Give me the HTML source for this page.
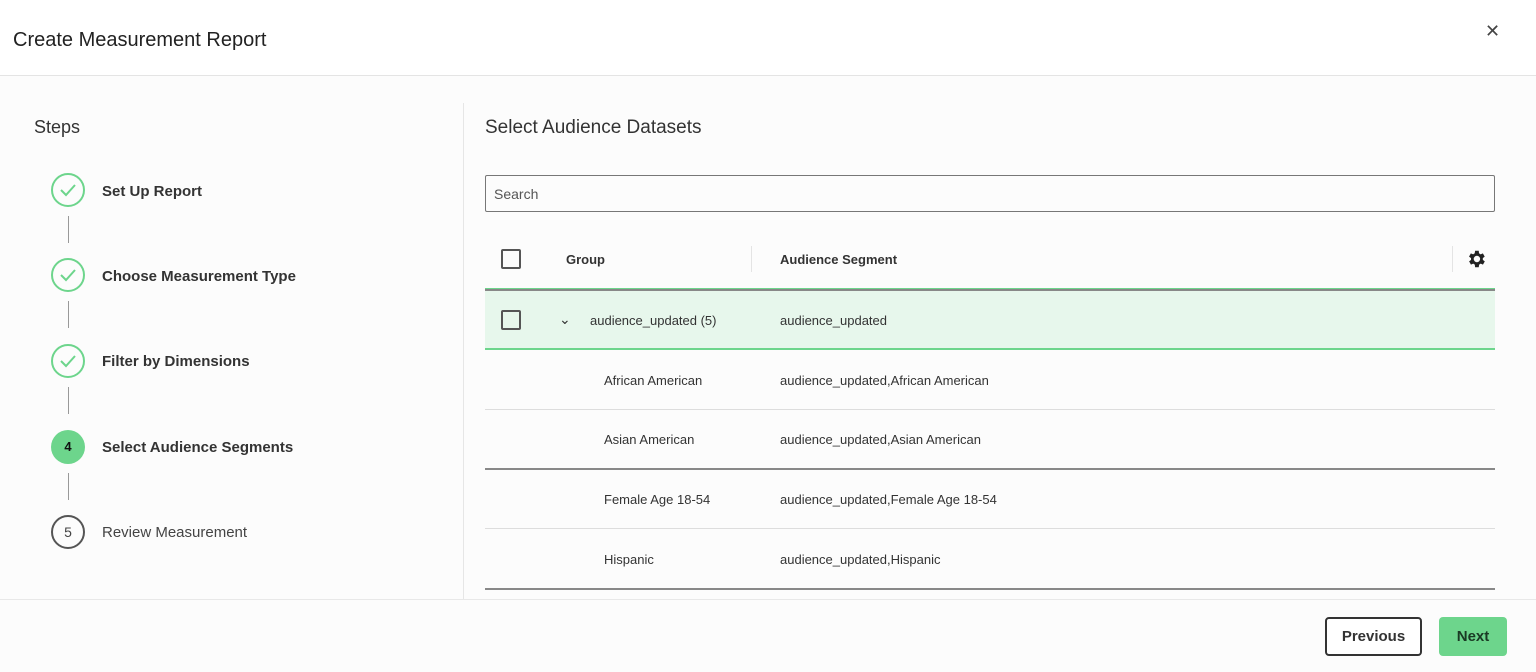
<!DOCTYPE html>
<html><head><meta charset="utf-8"><style>
*{box-sizing:border-box;margin:0;padding:0}
body{width:1536px;height:672px;background:#fcfcfc;font-family:"Liberation Sans",sans-serif;color:#333;position:relative;overflow:hidden}
.abs{position:absolute}
.hdr{left:0;top:0;width:1536px;height:76px;border-bottom:1px solid #e4e4e4;background:#fff}
.title{left:13px;top:29px;font-size:20px;color:#222}
.close{left:1485px;top:21px;font-size:18px;color:#444}
.side{left:463px;top:103px;width:1px;height:497px;background:#e6e6e6}
.steps{left:34px;top:117px;font-size:18px;color:#333}
.circ{width:34px;height:34px;border-radius:50%;left:51px}
.ok{border:2px solid #6dd58c}
.lbl{left:102px;font-size:15px;font-weight:bold;color:#333}
.vl{left:68px;width:1px;height:27px;background:#999}
.h2{left:485px;top:117px;font-size:19px;color:#333}
.search{left:485px;top:175px;width:1010px;height:37px;border:1px solid #777;border-radius:2px;padding:10px 8px;font-size:14px;color:#555}
.cb{width:20px;height:20px;border:2px solid #555;border-radius:2px;left:501px}
.th{font-size:13px;font-weight:bold;color:#333;top:252px}
.row{left:485px;width:1010px;height:60px}
.cell{font-size:13px;color:#333}
.btn{top:617px;height:39px;border-radius:4px;font-size:15px;font-weight:bold;text-align:center;line-height:35px}
</style></head><body>
<div class="abs hdr"></div>
<div class="abs title">Create Measurement Report</div>
<div class="abs close">✕</div>
<div class="abs side"></div>
<div class="abs steps">Steps</div>

<div class="abs circ ok" style="top:173px"><svg width="30" height="30" viewBox="0 0 30 30"><path d="M8 15l5 5 9-10" fill="none" stroke="#6dd58c" stroke-width="2"/></svg></div>
<div class="abs lbl" style="top:183px">Set Up Report</div>
<div class="abs vl" style="top:216px"></div>
<div class="abs circ ok" style="top:258px"><svg width="30" height="30" viewBox="0 0 30 30"><path d="M8 15l5 5 9-10" fill="none" stroke="#6dd58c" stroke-width="2"/></svg></div>
<div class="abs lbl" style="top:268px">Choose Measurement Type</div>
<div class="abs vl" style="top:301px"></div>
<div class="abs circ ok" style="top:344px"><svg width="30" height="30" viewBox="0 0 30 30"><path d="M8 15l5 5 9-10" fill="none" stroke="#6dd58c" stroke-width="2"/></svg></div>
<div class="abs lbl" style="top:353px">Filter by Dimensions</div>
<div class="abs vl" style="top:387px"></div>
<div class="abs circ" style="top:430px;background:#6dd58c;text-align:center;line-height:34px;font-weight:bold;font-size:13px;color:#111">4</div>
<div class="abs lbl" style="top:439px">Select Audience Segments</div>
<div class="abs vl" style="top:473px"></div>
<div class="abs circ" style="top:515px;border:2px solid #555;text-align:center;line-height:30px;font-size:14px;color:#444">5</div>
<div class="abs lbl" style="top:524px;font-weight:normal;color:#444">Review Measurement</div>

<div class="abs h2">Select Audience Datasets</div>
<div class="abs search">Search</div>

<div class="abs cb" style="top:249px"></div>
<div class="abs th" style="left:566px">Group</div>
<div class="abs" style="left:751px;top:246px;width:1px;height:26px;background:#e4e4e4"></div>
<div class="abs th" style="left:780px">Audience Segment</div>
<div class="abs" style="left:1452px;top:246px;width:1px;height:26px;background:#e4e4e4"></div>
<svg class="abs" style="left:1465px;top:248px" width="22" height="22" viewBox="0 0 24 24"><path fill="#222" d="M19.4 13a7.5 7.5 0 000-2l2.1-1.6-2-3.5-2.5 1a7 7 0 00-1.7-1L15 3h-4l-.4 2.9a7 7 0 00-1.7 1l-2.5-1-2 3.5L6.6 11a7.5 7.5 0 000 2l-2.1 1.6 2 3.5 2.5-1a7 7 0 001.7 1L11 21h4l.4-2.9a7 7 0 001.7-1l2.5 1 2-3.5zM13 15.5a3.5 3.5 0 110-7 3.5 3.5 0 010 7z"/></svg>

<div class="abs row" style="top:288px;height:62px;background:#e7f7ec;border-top:3px solid #888;border-bottom:2px solid #6dd58c"></div>
<div class="abs" style="left:485px;top:288px;width:1010px;height:1px;background:#6dd58c"></div>
<div class="abs cb" style="top:310px"></div>
<div class="abs cell" style="left:559px;top:311px;font-size:14px">⌄</div>
<div class="abs cell" style="left:590px;top:313px">audience_updated (5)</div>
<div class="abs cell" style="left:780px;top:313px">audience_updated</div>

<div class="abs cell" style="left:604px;top:373px">African American</div>
<div class="abs cell" style="left:780px;top:373px">audience_updated,African American</div>
<div class="abs" style="left:485px;top:409px;width:1010px;height:1px;background:#ddd"></div>
<div class="abs cell" style="left:604px;top:432px">Asian American</div>
<div class="abs cell" style="left:780px;top:432px">audience_updated,Asian American</div>
<div class="abs" style="left:485px;top:468px;width:1010px;height:2px;background:#888"></div>
<div class="abs cell" style="left:604px;top:492px">Female Age 18-54</div>
<div class="abs cell" style="left:780px;top:492px">audience_updated,Female Age 18-54</div>
<div class="abs" style="left:485px;top:528px;width:1010px;height:1px;background:#ddd"></div>
<div class="abs cell" style="left:604px;top:552px">Hispanic</div>
<div class="abs cell" style="left:780px;top:552px">audience_updated,Hispanic</div>
<div class="abs" style="left:485px;top:588px;width:1010px;height:2px;background:#888"></div>

<div class="abs" style="left:0;top:599px;width:1536px;height:1px;background:#e8e8e8"></div>
<div class="abs btn" style="left:1325px;width:97px;border:2px solid #333;background:#fff;color:#333">Previous</div>
<div class="abs btn" style="left:1439px;width:68px;background:#6dd58c;color:#1a3a24;line-height:39px">Next</div>
</body></html>
